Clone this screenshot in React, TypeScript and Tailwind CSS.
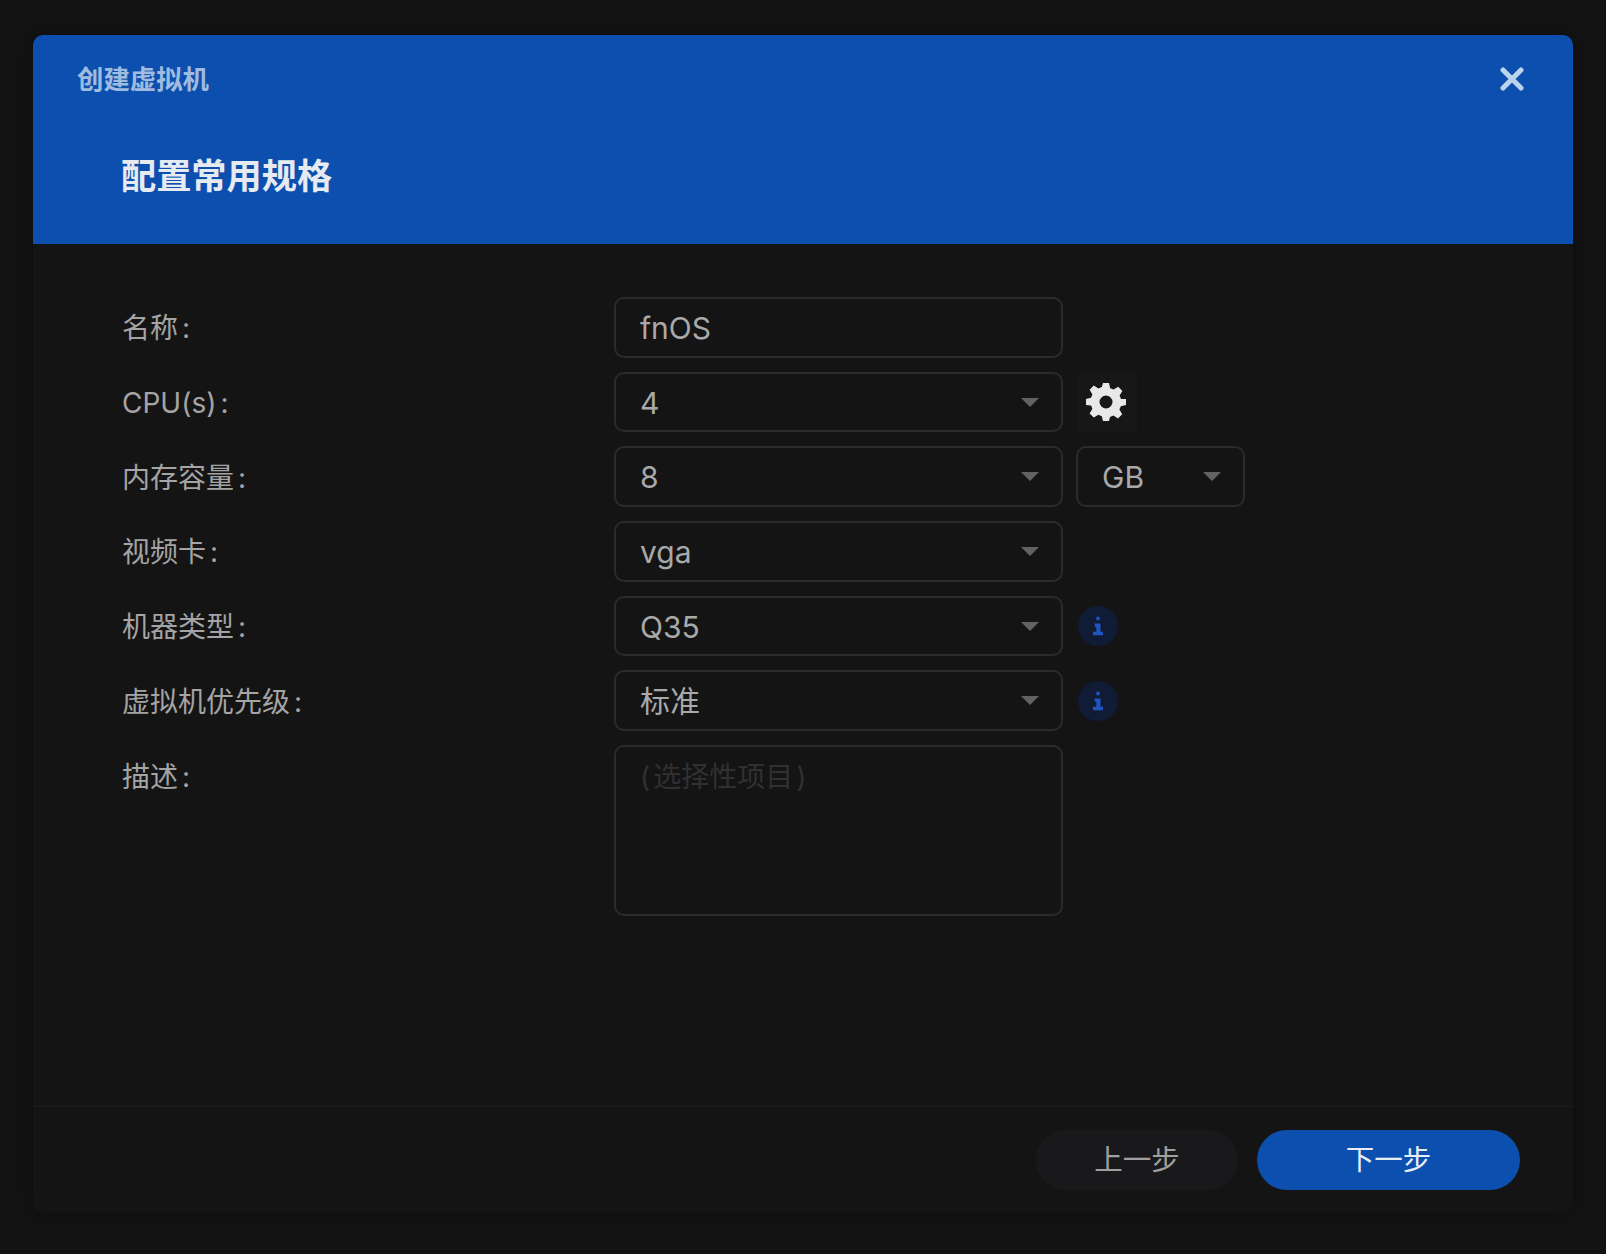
import { ReactNode } from "react";

const cjk = "font-['Inter','Noto_Sans_CJK_SC',sans-serif]";

function Caret() {
  return (
    <svg width="18" height="9" viewBox="0 0 18 9" className="absolute right-[22px] top-[24px]">
      <path d="M0 0H18L9 9Z" fill="#626262" />
    </svg>
  );
}

function Select({ value, className }: { value: string; className: string }) {
  return (
    <div className={`relative flex h-[60.7px] shrink-0 items-center rounded-[10px] border-2 border-[#2b2b2c] pl-[24px] pt-[2px] text-[30px] text-[#a9a9a9] ${className}`}>
      {value}
      <Caret />
    </div>
  );
}

function Info() {
  return (
    <div className="ml-[15px] flex h-[40px] w-[40px] items-center justify-center rounded-full bg-[#101b36]">
      <svg width="10" height="20" viewBox="0 0 12 22">
        <path d="M4 0h4v4H4zM2 8h7v10h3v4H0v-4h4v-6H2z" fill="#1f55c0" />
      </svg>
    </div>
  );
}

function Label({ text }: { text: string }) {
  return (
    <>
      {text}
      <span className="ml-[4px]">:</span>
    </>
  );
}

function Row({ label, children }: { label: string; children: ReactNode }) {
  return (
    <div className="flex items-center">
      <div className="w-[492px] shrink-0 pt-[2px] text-[28px] text-[#a4a4a4]">
        <Label text={label} />
      </div>
      {children}
    </div>
  );
}

export default function App() {
  return (
    <div className={`h-[1254px] w-[1606px] bg-[#131314] pl-[33px] pt-[35px] ${cjk}`}>
      <div className="flex h-[1178px] w-[1540px] flex-col overflow-hidden rounded-[10px] bg-[#141415] shadow-[0_0_24px_rgba(0,0,0,0.35)]">
        <div className="h-[209px] shrink-0 bg-[#0d4fae]">
          <div className="flex items-center justify-between pl-[44px] pr-[49px] pt-[23px]">
            <span className="text-[26.4px] font-bold leading-[42px] text-[#9fbbdf]">创建虚拟机</span>
            <svg width="24" height="24" viewBox="0 0 24 24">
              <path d="M3 3L21 21M21 3L3 21" stroke="#bcd3ec" strokeWidth="5" strokeLinecap="round" />
            </svg>
          </div>
          <div className="pl-[88px] pt-[51px] text-[35.2px] font-bold leading-[50px] text-[#e6eaf1]">配置常用规格</div>
        </div>

        <div className="flex flex-1 flex-col gap-[14px] pl-[89px] pt-[53px]">
          <Row label="名称">
            <div className="flex h-[60.7px] w-[449px] items-center rounded-[10px] border-2 border-[#2b2b2c] pl-[24px] pt-[2px] text-[30px] text-[#a9a9a9]">fnOS</div>
          </Row>
          <Row label="CPU(s)">
            <Select value="4" className="w-[449px]" />
            <div className="ml-[15px] flex h-[60px] w-[59px] items-center justify-center bg-[#171718] pr-[4px]">
              <svg width="40" height="40" viewBox="0 0 40 40">
                <path
                  fillRule="evenodd"
                  d="M17 1h6l1.2 5.2 3.4 1.4 4.6-2.8 4.2 4.2-2.8 4.6 1.4 3.4L40 17v6l-5.2 1.2-1.4 3.4 2.8 4.6-4.2 4.2-4.6-2.8-3.4 1.4L23 39h-6l-1.2-4.8-3.4-1.4-4.6 2.8-4.2-4.2 2.8-4.6-1.4-3.4L0 23v-6l5-1.2 1.4-3.4-2.8-4.6 4.2-4.2 4.6 2.8 3.4-1.4zM20 13.5a6.5 6.5 0 1 0 0 13 6.5 6.5 0 0 0 0-13z"
                  fill="#e8e8e8"
                />
              </svg>
            </div>
          </Row>
          <Row label="内存容量">
            <Select value="8" className="w-[449px]" />
            <Select value="GB" className="ml-[13px] w-[169px]" />
          </Row>
          <Row label="视频卡">
            <Select value="vga" className="w-[449px]" />
          </Row>
          <Row label="机器类型">
            <Select value="Q35" className="w-[449px]" />
            <Info />
          </Row>
          <Row label="虚拟机优先级">
            <Select value="标准" className="w-[449px]" />
            <Info />
          </Row>
          <div className="flex items-start">
            <div className="w-[492px] shrink-0 pt-[11px] text-[28px] text-[#a4a4a4]">
              <Label text="描述" />
            </div>
            <div className="h-[171px] w-[449px] rounded-[10px] border-2 border-[#2b2b2c] pl-[24px] pt-[9px] text-[28px] text-[#303031]">
              (<span className="mx-[3px]">选择性项目</span>)
            </div>
          </div>
        </div>

        <div className="flex h-[107px] shrink-0 items-start justify-end gap-[19px] border-t border-[#1e1e20] pr-[53px] pt-[23px]">
          <div className="flex h-[60px] w-[202px] items-center justify-center rounded-full bg-[#19191b] text-[28.5px] text-[#a0a0a0]">上一步</div>
          <div className="flex h-[60px] w-[263px] items-center justify-center rounded-full bg-[#0d4fae] text-[28.5px] text-[#e6eef8]">下一步</div>
        </div>
      </div>
    </div>
  );
}
